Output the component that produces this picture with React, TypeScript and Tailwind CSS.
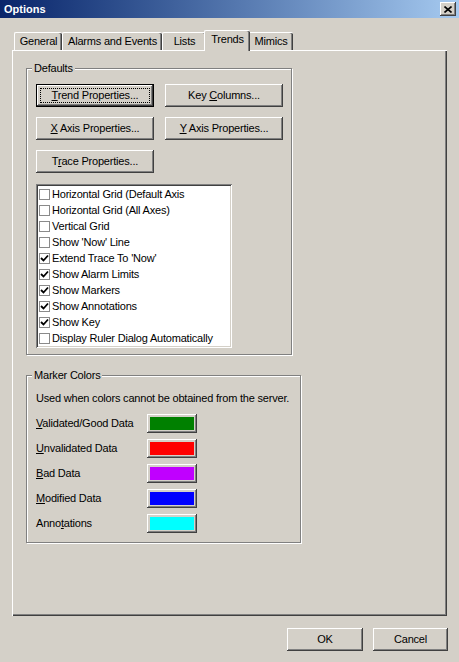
import React from "react";

const raised =
  "shadow-[inset_-1px_-1px_#404040,inset_1px_1px_#ffffff,inset_-2px_-2px_#808080,inset_2px_2px_#d4d0c8]";
const sunken =
  "shadow-[inset_1px_1px_#808080,inset_-1px_-1px_#ffffff,inset_2px_2px_#404040,inset_-2px_-2px_#d4d0c8]";
const etched = "border border-[#808080] shadow-[inset_1px_1px_#ffffff,1px_1px_#ffffff]";

function Btn({ children, w, def }: { children: React.ReactNode; w: string; def?: boolean }) {
  return (
    <div
      className={`relative h-[23px] ${w} flex items-center justify-center bg-[#d4d0c8] ${raised} ${
        def ? "border border-black" : ""
      }`}
    >
      {def && <div className="absolute inset-[3px] border border-dotted border-black" />}
      <span className="leading-[13px]">{children}</span>
    </div>
  );
}

function U({ children }: { children: React.ReactNode }) {
  return <span className="underline underline-offset-[1px]">{children}</span>;
}

function Tab({ label, w, active }: { label: string; w: string; active?: boolean }) {
  return (
    <div
      className={`${w} flex justify-center pt-[2px] leading-[13px] bg-[#d4d0c8] border-t border-l border-white rounded-t-[2px] shadow-[inset_-1px_0_#404040,inset_-2px_0_#808080] ${
        active ? "h-[21px] -mb-px -mx-[2px] relative z-10" : "h-[18px]"
      }`}
    >
      {label}
    </div>
  );
}

function Group({ title, className, children }: { title: string; className: string; children: React.ReactNode }) {
  return (
    <div className={`relative ${etched} ${className}`}>
      <span className="absolute -top-[7px] left-[5px] px-[2px] bg-[#d4d0c8] leading-[13px]">{title}</span>
      {children}
    </div>
  );
}

const options: [string, boolean][] = [
  ["Horizontal Grid (Default Axis", false],
  ["Horizontal Grid (All Axes)", false],
  ["Vertical Grid", false],
  ["Show 'Now' Line", false],
  ["Extend Trace To 'Now'", true],
  ["Show Alarm Limits", true],
  ["Show Markers", true],
  ["Show Annotations", true],
  ["Show Key", true],
  ["Display Ruler Dialog Automatically", false],
];

const markers: [React.ReactNode, string][] = [
  [<><U>V</U>alidated/Good Data</>, "bg-[#008000]"],
  [<><U>U</U>nvalidated Data</>, "bg-[#ff0000]"],
  [<><U>B</U>ad Data</>, "bg-[#c000ff]"],
  [<><U>M</U>odified Data</>, "bg-[#0000ff]"],
  [<>Anno<U>t</U>ations</>, "bg-[#00ffff]"],
];

export default function App() {
  return (
    <div className="w-[459px] h-[662px] bg-[#d4d0c8] flex flex-col overflow-hidden text-black text-[11px] tracking-[-0.2px] font-['Liberation_Sans',Arial,sans-serif]">
      {/* Title bar */}
      <div className="h-[18px] flex items-center justify-between pl-[4px] pr-[3px] bg-linear-to-r from-[#0a246a] to-[#a6caf0]">
        <span className="text-white font-bold tracking-normal">Options</span>
        <div className={`w-[16px] h-[14px] flex items-center justify-center bg-[#d4d0c8] ${raised}`}>
          <svg width="8" height="7" viewBox="0 0 8 7">
            <path d="M0.5 0.5 L7.5 6.5 M7.5 0.5 L0.5 6.5" stroke="#000" strokeWidth="1.6" />
          </svg>
        </div>
      </div>

      {/* Tabs */}
      <div className="mt-[12px] h-[20px] flex items-end pl-[14px]">
        <Tab label="General" w="w-[48px]" />
        <Tab label="Alarms and Events" w="w-[100px]" />
        <Tab label="Lists" w="w-[44px]" />
        <Tab label="Trends" w="w-[46px]" active />
        <Tab label="Mimics" w="w-[45px]" />
      </div>

      {/* Tab panel */}
      <div className="mx-[12px] h-[566px] flex flex-col items-start pl-[14px] pt-[18px] shadow-[inset_1px_1px_#ffffff,inset_-1px_-1px_#404040,inset_-2px_-2px_#808080]">
        <Group title="Defaults" className="w-[266px] pt-[15px] pl-[9px] pb-[6px]">
          <div className="grid grid-cols-[118px_118px] gap-x-[11px] gap-y-[10px]">
            <Btn w="w-[118px]" def>
              <U>T</U>rend Properties...
            </Btn>
            <Btn w="w-[118px]">
              Key <U>C</U>olumns...
            </Btn>
            <Btn w="w-[118px]">
              <U>X</U> Axis Properties...
            </Btn>
            <Btn w="w-[118px]">
              <U>Y</U> Axis Properties...
            </Btn>
            <Btn w="w-[118px]">
              T<U>r</U>ace Properties...
            </Btn>
          </div>
          <div className={`mt-[11px] w-[196px] h-[164px] bg-white p-[2px] ${sunken}`}>
            {options.map(([label, checked]) => (
              <div key={label} className="h-[16px] flex items-center pl-[1px] gap-[2px] whitespace-nowrap">
                <div className="w-[11px] h-[11px] border border-[#8a8a8a] bg-white flex items-center justify-center shrink-0">
                  {checked && (
                    <svg width="9" height="9" viewBox="0 0 9 9">
                      <path d="M1 4 L3.5 6.5 L8 1.5" fill="none" stroke="#000" strokeWidth="1.8" />
                    </svg>
                  )}
                </div>
                <span className="leading-[13px]">{label}</span>
              </div>
            ))}
          </div>
        </Group>

        <Group title="Marker Colors" className="mt-[20px] w-[275px] pt-[16px] pl-[9px] pb-[9px]">
          <div className="leading-[13px]">Used when colors cannot be obtained from the server.</div>
          <div className="mt-[9px] flex flex-col gap-[6px]">
            {markers.map(([label, color], i) => (
              <div key={i} className="flex items-center h-[19px]">
                <span className="w-[111px] leading-[13px]">{label}</span>
                <div className={`w-[50px] h-[19px] p-[3px] bg-[#d4d0c8] ${raised}`}>
                  <div className={`w-full h-full ${color}`} />
                </div>
              </div>
            ))}
          </div>
        </Group>
      </div>

      {/* Dialog buttons */}
      <div className="mt-[12px] flex justify-end gap-[10px] pr-[11px]">
        <Btn w="w-[76px]">OK</Btn>
        <Btn w="w-[75px]">Cancel</Btn>
      </div>
    </div>
  );
}
